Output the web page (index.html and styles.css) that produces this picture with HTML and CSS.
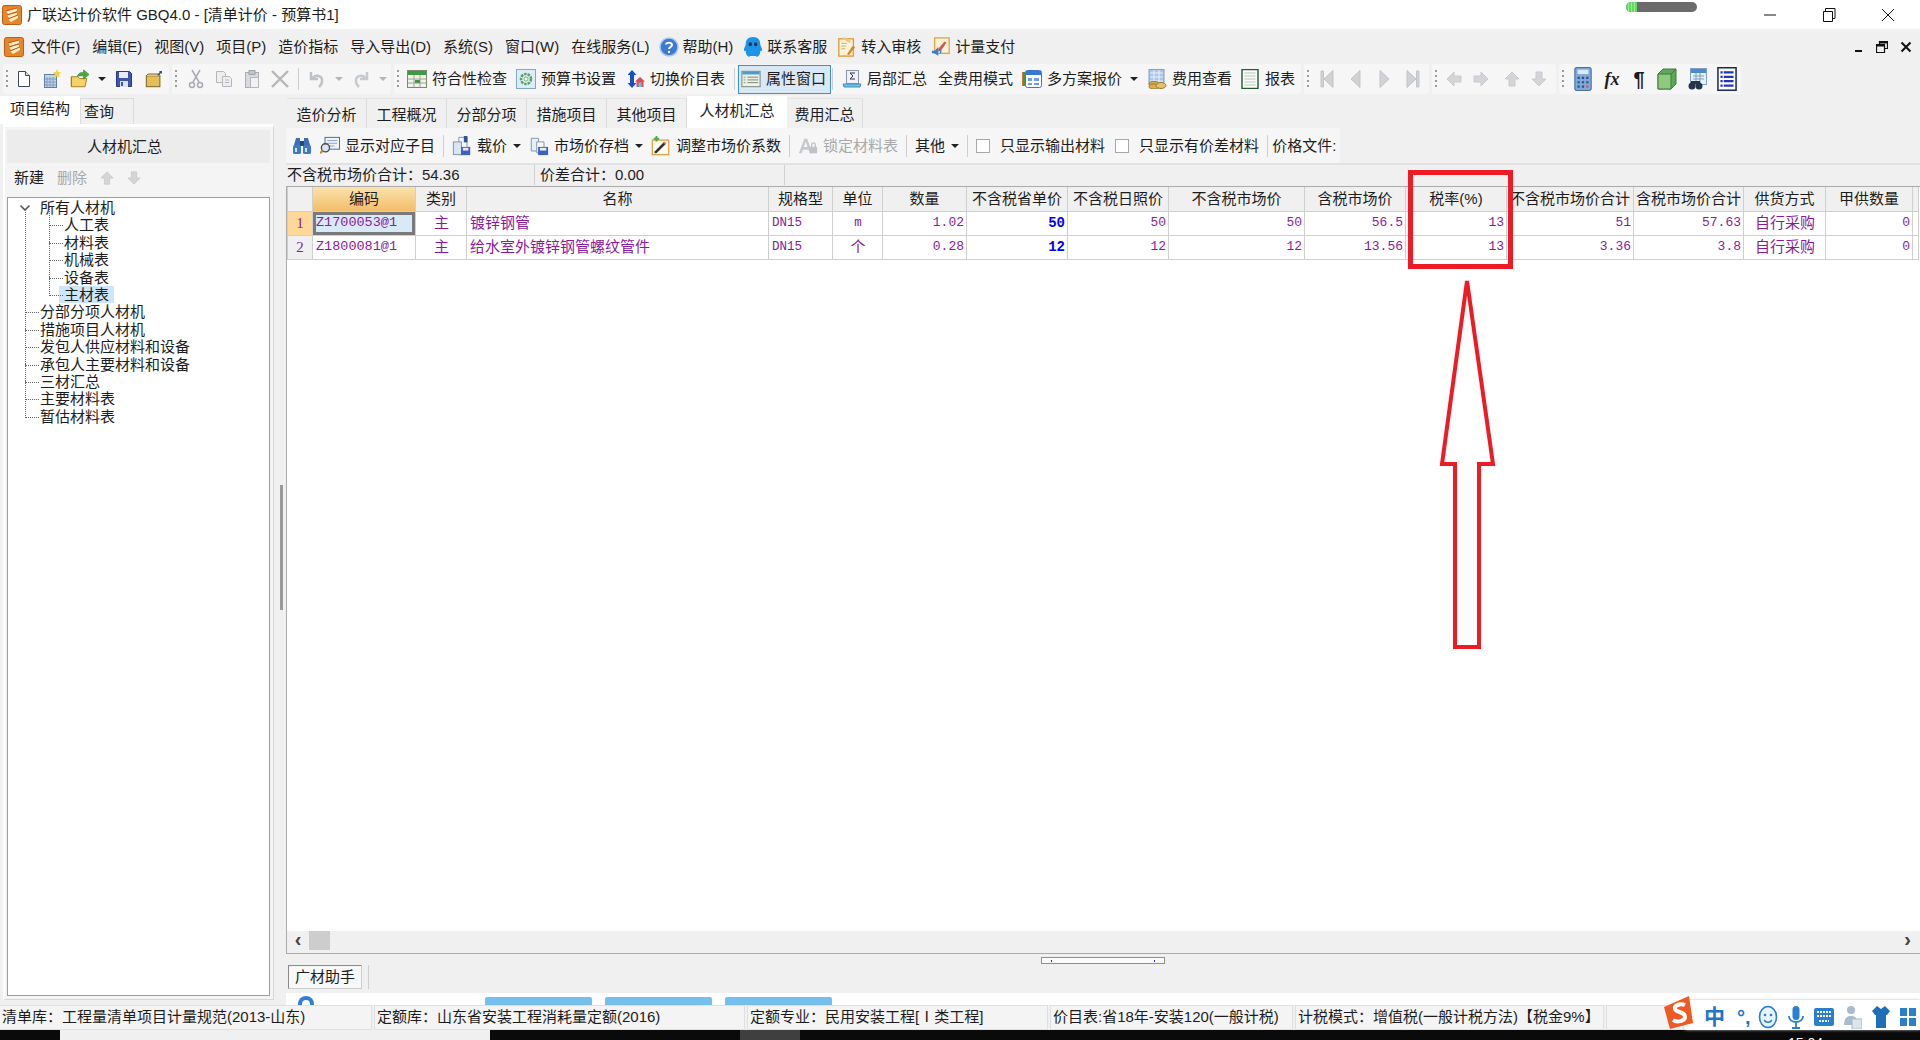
FILE: index.html
```html
<!DOCTYPE html>
<html lang="zh-CN">
<head>
    <meta charset="UTF-8">
    <title>广联达计价软件 GBQ4.0 - [清单计价 - 预算书1]</title>
    <link rel="stylesheet" href="styles.css">
</head>
<body>
    <!-- shared icons -->
    <svg class="icon-defs" width="0" height="0">
        <symbol id="i-logo" viewBox="0 0 20 20"><rect x="0.5" y="0.5" width="19" height="19" rx="2" fill="#e8842c" stroke="#b85f16"/><path d="M4 6l11-3v3L6 9zM5 10l10-3v3L7 13zM6 14l10-4v3L9 17z" fill="#fff3c4"/><path d="M4 6l11-3M5 10l10-3M6 14l10-4" stroke="#c9501a" fill="none"/></symbol>
        <symbol id="i-doc" viewBox="0 0 20 20"><path d="M4.5 2.5h7l4 4v11h-11z" fill="#fff" stroke="#3a4a5a"/><path d="M11.5 2.5v4h4" fill="#dde6ee" stroke="#3a4a5a"/></symbol>
        <symbol id="i-newtable" viewBox="0 0 20 20"><rect x="2.5" y="5.5" width="12" height="13" fill="#c5d5e8" stroke="#5f7ea3"/><path d="M5 8v10M8 8v10M11 8v10M3 10h11M3 13h11M3 16h11" stroke="#7f9cc0"/><path d="M15 0l1.2 3 3 .5-2.2 2 .6 3-2.6-1.500-2.600 1.500.6-3-2.200-2 3-.5z" fill="#f6cf3a"/></symbol>
        <symbol id="i-open" viewBox="0 0 22 20"><path d="M1.500 7.500h7l2 2h8l-2 9h-15z" fill="#f3d26a" stroke="#a07a18"/><path d="M1.500 7.500v11" stroke="#a07a18"/><path d="M8 7c1-3 4-5 7-4V0l6 5-6 5V7c-3-1-5 0-7 0z" fill="#49a93c" stroke="#2a7a22" stroke-width=".6"/></symbol>
        <symbol id="i-save" viewBox="0 0 20 20"><path d="M2.500 2.500h13l2 2v13h-15z" fill="#3f54ac" stroke="#2a3a80"/><rect x="5" y="3" width="9" height="6" fill="#e6ebf5"/><rect x="6" y="12" width="8" height="6" fill="#dfe4f0"/><rect x="7" y="13" width="2" height="4" fill="#3f54ac"/></symbol>
        <symbol id="i-folder" viewBox="0 0 22 20"><rect x="2.500" y="6.500" width="15" height="12" fill="#e3bf55" stroke="#6e5a20"/><path d="M2.500 6.500l2-2h12l1 2" fill="#f2dd96" stroke="#6e5a20"/><path d="M15 6l4-4m-2 0h2v2" stroke="#35506e" stroke-width="1.500" fill="none"/></symbol>
        <symbol id="i-cut" viewBox="0 0 20 20"><g fill="none" stroke="#a9adb3" stroke-width="1.500"><path d="M6 1l7 12M14 1L7 13"/><circle cx="6" cy="16" r="2.500"/><circle cx="14" cy="16" r="2.500"/></g></symbol>
        <symbol id="i-copy" viewBox="0 0 20 20"><g fill="#eceef0" stroke="#b4b8bd"><path d="M2.500 2.500h7l2 2v9h-9z"/><path d="M8.500 7.500h7l2 2v8h-9z"/><path d="M11 11h4M11 13.500h4" fill="none"/></g></symbol>
        <symbol id="i-paste" viewBox="0 0 20 20"><rect x="3.500" y="3.500" width="13" height="15" fill="#d8dadd" stroke="#a9adb3"/><rect x="7" y="1.500" width="6" height="4" fill="#c3c6ca" stroke="#a0a4a9"/><rect x="8.500" y="8.500" width="8" height="10" fill="#f1f2f3" stroke="#b4b8bd"/></symbol>
        <symbol id="i-del" viewBox="0 0 20 20"><path d="M2 2l16 16M18 2L2 18" stroke="#b4b7bb" stroke-width="2.400"/></symbol>
        <symbol id="i-undo" viewBox="0 0 20 20"><path d="M4 3v7h7M5 10c3-5 11-4 10 3-.3 2-1 3-3 5" fill="none" stroke="#bcc2c8" stroke-width="2.500"/></symbol>
        <symbol id="i-redo" viewBox="0 0 20 20"><path d="M16 3v7H9M15 10c-3-5-11-4-10 3 .3 2 1 3 3 5" fill="none" stroke="#c6cbd0" stroke-width="2.500"/></symbol>
        <symbol id="i-check" viewBox="0 0 20 20"><rect x=".5" y="1.500" width="19" height="17" fill="#f3f3ee" stroke="#7b8a6c"/><rect x="1" y="2" width="18" height="4" fill="#3f9a45"/><path d="M1 10h18M1 14h18M7 6v12M13 6v12" stroke="#9aa68c"/><path d="M8 11h5v3H8z" fill="#3f9a45"/></symbol>
        <symbol id="i-gear" viewBox="0 0 20 20"><rect x=".5" y=".5" width="19" height="19" fill="#dcecf8" stroke="#7fa9cc"/><circle cx="10" cy="10" r="5" fill="none" stroke="#5aa25a" stroke-width="2.500" stroke-dasharray="2.500 1"/><circle cx="10" cy="10" r="2" fill="#fff" stroke="#7fb37f"/></symbol>
        <symbol id="i-switch" viewBox="0 0 20 20"><path d="M7 1l4.500 5H9v8h2.500L7 19l-4.500-5H5V6H2.500z" fill="#1650c8"/><path d="M15 8l5 4.500h-1.500V18h-7v-5.500H10z" fill="#e24a5a"/><rect x="13.500" y="13.500" width="3" height="4.500" fill="#5bc6e8"/></symbol>
        <symbol id="i-props" viewBox="0 0 22 20"><rect x="1" y="1.500" width="20" height="17" fill="#eef2e8" stroke="#6f7f70"/><rect x="1.500" y="2" width="19" height="3" fill="#4a9cd0"/><path d="M7 8h12M7 11h12M7 14h12" stroke="#6f7f70"/><path d="M3 8h2M3 11h2M3 14h2" stroke="#5aa25a"/></symbol>
        <symbol id="i-sum" viewBox="0 0 20 20"><rect x="4.500" y="1.500" width="12" height="13" fill="#eef1f5" stroke="#8a96a6"/><path d="M13 4H8l3 3-3 3h5" fill="none" stroke="#334"/><path d="M1 15h18l-1 3H2z" fill="#6ec0ea" stroke="#3f8fbf"/></symbol>
        <symbol id="i-multi" viewBox="0 0 20 20"><rect x="0" y="3" width="4" height="14" fill="#d9762a"/><rect x="1" y="3" width="2" height="14" fill="#3f9a45"/><rect x="3.500" y="1.500" width="16" height="17" rx="2" fill="#fff" stroke="#3a78d0"/><rect x="4" y="2" width="15" height="4" fill="#3a78d0"/><path d="M6 9h4v3H6zM12 9h5v3h-5zM6 14h4v2H6zM12 14h5v2h-5z" fill="#6c9fe0"/></symbol>
        <symbol id="i-coins" viewBox="0 0 20 20"><rect x="2" y="0.500" width="15" height="14" fill="#a9c8e8" stroke="#7fa0c4"/><path d="M3 4h13M3 8h13M3 12h13M7 1v13M12 1v13" stroke="#e8f0f8"/><ellipse cx="7" cy="15" rx="5" ry="2.500" fill="#d9ae55" stroke="#9c7a2c"/><ellipse cx="7" cy="17.500" rx="5" ry="2.500" fill="#d9ae55" stroke="#9c7a2c"/><ellipse cx="14" cy="16.500" rx="5" ry="3" fill="#e4bf6d" stroke="#9c7a2c"/></symbol>
        <symbol id="i-report" viewBox="0 0 20 20"><rect x="2" y=".5" width="16" height="19" fill="#f8fbf6" stroke="#1f5a30" stroke-width="1.400"/><path d="M4.500 4h11M4.500 7h11M4.500 10h11M4.500 13h11M4.500 16h11" stroke="#b9c7bd"/></symbol>
        <symbol id="i-first" viewBox="0 0 16 20"><path d="M2 2h2.500v16H2zM14 1.500v17L5 10z" fill="#d0d3d6" stroke="#c2c5c8"/></symbol>
        <symbol id="i-prev" viewBox="0 0 16 20"><path d="M12 1.500v17L3 10z" fill="#d0d3d6" stroke="#c2c5c8"/></symbol>
        <symbol id="i-next" viewBox="0 0 16 20"><path d="M4 1.500v17L13 10z" fill="#d0d3d6" stroke="#c2c5c8"/></symbol>
        <symbol id="i-last" viewBox="0 0 16 20"><path d="M14 2h-2.500v16H14zM2 1.500v17L11 10z" fill="#d0d3d6" stroke="#c2c5c8"/></symbol>
        <symbol id="i-aleft" viewBox="0 0 16 16"><path d="M1 8l7-7v4h7v6H8v4z" fill="#d3d5d8" stroke="#c8cacc"/></symbol>
        <symbol id="i-aright" viewBox="0 0 16 16"><path d="M15 8L8 1v4H1v6h7v4z" fill="#d3d5d8" stroke="#c8cacc"/></symbol>
        <symbol id="i-aup" viewBox="0 0 16 16"><path d="M8 1l7 7h-4v7H5V8H1z" fill="#d3d5d8" stroke="#c8cacc"/></symbol>
        <symbol id="i-adown" viewBox="0 0 16 16"><path d="M8 15l7-7h-4V1H5v7H1z" fill="#d3d5d8" stroke="#c8cacc"/></symbol>
        <symbol id="i-calc" viewBox="0 0 16 22"><rect x=".5" y=".5" width="15" height="21" rx="2" fill="#7ea8d8" stroke="#4a6f9f"/><rect x="3" y="2.500" width="10" height="4" fill="#dbe8f5"/><path d="M3 9h2v2H3zM7 9h2v2H7zM11 9h2v2h-2zM3 13h2v2H3zM7 13h2v2H7zM11 13h2v2h-2zM3 17h2v2H3zM7 17h2v2H7z" fill="#2f4f7f"/><path d="M11 17h2v2h-2z" fill="#d9534f"/></symbol>
        <symbol id="i-cube" viewBox="0 0 20 22"><path d="M1 6l5-5h13v15l-5 5H1z" fill="#5fa85a" stroke="#3d7a3a"/><path d="M1 6h13v15H1z" fill="#8ec97f" stroke="#3d7a3a"/><path d="M14 6l5-5" stroke="#3d7a3a"/></symbol>
        <symbol id="i-sheetfind" viewBox="0 0 20 22"><rect x="3.500" y=".5" width="16" height="16" fill="#e8f0f8" stroke="#7fa0c4"/><rect x="4" y="1" width="15" height="4" fill="#4a8ad0"/><path d="M6 8h11M6 11h11M9 5v10M13 5v10" stroke="#7fa0c4"/><circle cx="5" cy="18" r="3.500" fill="#26344a"/><circle cx="12" cy="18" r="3.500" fill="#26344a"/><rect x="4" y="13" width="9" height="3" fill="#26344a"/></symbol>
        <symbol id="i-list" viewBox="0 0 18 22"><rect x=".7" y=".7" width="16.600" height="20.600" fill="#fff" stroke="#1c2a55" stroke-width="1.400"/><path d="M3 4h2v2H3zM3 8h2v2H3zM3 12h2v2H3zM3 16h2v2H3zM6 4h9v2H6zM6 8h9v2H6zM6 12h9v2H6zM6 16h9v2H6z" fill="#2436b8"/></symbol>
        <symbol id="i-binoc" viewBox="0 0 20 20"><path d="M2 9l2-7h4v7zM12 9V2h4l2 7z" fill="#3a6fb8"/><rect x="8" y="5" width="4" height="5" fill="#27476f"/><rect x="1" y="9" width="8" height="9" rx="1.500" fill="#3f7bc4"/><rect x="11" y="9" width="8" height="9" rx="1.500" fill="#3f7bc4"/><rect x="3" y="12" width="2" height="4" fill="#cfe3f7"/><rect x="13" y="12" width="2" height="4" fill="#cfe3f7"/></symbol>
        <symbol id="i-monitor" viewBox="0 0 22 20"><rect x="5.500" y=".5" width="16" height="13" fill="#eef3f8" stroke="#44648a"/><path d="M8 4h11M8 7h11M8 10h8" stroke="#7fa0c4"/><circle cx="6" cy="12" r="4.500" fill="#d9e6f2" stroke="#4a4a4a" stroke-width="1.500"/><path d="M3 15l-3 3" stroke="#c28a2c" stroke-width="2.500"/></symbol>
        <symbol id="i-load" viewBox="0 0 22 22"><path d="M7.500 1.500h9v19h-9z" fill="#f5f7fa" stroke="#7f8ea0"/><path d="M13 0h4v7h-4z" fill="#2f4f9f"/><rect x="1.500" y="6.500" width="9" height="14" fill="#dbe5f1" stroke="#7f8ea0"/><rect x="10" y="12" width="10" height="9" fill="#3f5fc0"/><rect x="12" y="13" width="6" height="3" fill="#e8eef8"/></symbol>
        <symbol id="i-store" viewBox="0 0 22 22"><path d="M2.500 2.500h8v14h-8z" fill="#e8eef5" stroke="#7f8ea0"/><path d="M8.500 6.500h8v12h-8z" fill="#f8fafc" stroke="#7f8ea0"/><rect x="10" y="12" width="11" height="9" fill="#3f5fc0"/><rect x="12" y="13" width="7" height="3" fill="#e8eef8"/></symbol>
        <symbol id="i-adjust" viewBox="0 0 22 22"><rect x="1.500" y="4.500" width="18" height="16" fill="#fdfbf2" stroke="#e0a44a" stroke-width="1.500"/><path d="M4 17l10-10 2 2-10 10H4z" fill="#333"/><path d="M14 7l2 2" stroke="#d9534f" stroke-width="2"/><path d="M6 0v6M3 3h6" stroke="#4aa84a" stroke-width="2"/></symbol>
        <symbol id="i-lock" viewBox="0 0 22 20"><path d="M1 18L7 2h3l6 16h-3l-1.500-4h-6L4 18zM6.500 11h4L8.500 5z" fill="#c6c9cc"/><rect x="13" y="11" width="8" height="7" fill="#bfc2c6"/><path d="M15 11V8.500a2 2 0 014 0V11" fill="none" stroke="#bfc2c6" stroke-width="1.500"/></symbol>
        <symbol id="i-help" viewBox="0 0 20 20"><circle cx="10" cy="10" r="9" fill="#3b78d8" stroke="#a9c8ef" stroke-width="1.500"/><path d="M7 7.500C7 5 13 5 13 8c0 2-3 2-3 4" fill="none" stroke="#fff" stroke-width="2"/><circle cx="10" cy="15" r="1.200" fill="#fff"/></symbol>
        <symbol id="i-service" viewBox="0 0 20 22"><path d="M10 0c6 0 8 4 8 8 0 2 2 4 2 6 0 1-1 2-2 1 0 3-1 5-2 6-1 1-2 1-3 0H7c-1 1-2 1-3 0-1-1-2-3-2-6-1 1-2 0-2-1 0-2 2-4 2-6 0-4 2-8 8-8z" fill="#1f93e8"/><ellipse cx="7" cy="8" rx="1.800" ry="2.300" fill="#08365c"/><ellipse cx="13" cy="8" rx="1.800" ry="2.300" fill="#08365c"/></symbol>
        <symbol id="i-audit" viewBox="0 0 20 22"><rect x="1" y="2" width="16" height="19" fill="#fdf3d7" stroke="#e29a3c" stroke-width="1.500"/><path d="M4 7h6M4 10h5M4 13h4" stroke="#c9a56a"/><path d="M19 11l-7 9-2-1 6-9z" fill="#d8842a"/><path d="M5 2l2-2 7 4-1 3z" fill="#e8c88a"/></symbol>
        <symbol id="i-pay" viewBox="0 0 20 22"><rect x="3" y="1" width="16" height="17" fill="#fdf3d7" stroke="#e0a44a" stroke-width="1.500"/><path d="M7 13l7-8 2 1-6 9-3 1z" fill="#d9534f"/><path d="M0 15h3l4-4v10l-4-3H0z" fill="#2f7fd8"/><path d="M9 14c1 1 1 3 0 4" stroke="#2f7fd8" stroke-width="1.500" fill="none"/></symbol>
    </svg>

    <header class="title-bar">
        <svg class="ic title-logo"><use href="#i-logo"/></svg>
        <span class="title-text">广联达计价软件 GBQ4.0 - [清单计价 - 预算书1]</span>
        <div class="net-pill"><span class="net-pill-fill"></span></div>
        <div class="win-btns">
            <svg width="14" height="14" viewBox="0 0 14 14"><path d="M1 7h12" stroke="#111"/></svg>
            <svg width="14" height="14" viewBox="0 0 14 14"><path d="M1.500 3.500h9v10h-9zM3.500 3.500v-3h9.500v10h-2.500" fill="none" stroke="#111"/></svg>
            <svg width="14" height="14" viewBox="0 0 14 14"><path d="M1 1l12 12M13 1L1 13" stroke="#111"/></svg>
        </div>
    </header>

    <nav class="menu-bar">
        <svg class="ic menu-logo"><use href="#i-logo"/></svg>
        <a class="menu-item">文件(F)</a>
        <a class="menu-item">编辑(E)</a>
        <a class="menu-item">视图(V)</a>
        <a class="menu-item">项目(P)</a>
        <a class="menu-item">造价指标</a>
        <a class="menu-item">导入导出(D)</a>
        <a class="menu-item">系统(S)</a>
        <a class="menu-item">窗口(W)</a>
        <a class="menu-item last-text">在线服务(L)</a>
        <a class="menu-item has-icon"><svg class="ic"><use href="#i-help"/></svg>帮助(H)</a>
        <a class="menu-item has-icon"><svg class="ic"><use href="#i-service"/></svg>联系客服</a>
        <a class="menu-item has-icon"><svg class="ic"><use href="#i-audit"/></svg>转入审核</a>
        <a class="menu-item has-icon"><svg class="ic"><use href="#i-pay"/></svg>计量支付</a>
        <div class="mdi-btns">
            <svg width="10" height="12" viewBox="0 0 10 12"><path d="M1 9h7v2H1z" fill="#111"/></svg>
            <svg width="12" height="12" viewBox="0 0 12 12"><path d="M.5 3.500h8v8h-8zM3.500 3.500V.5h8v7h-3" fill="none" stroke="#111" stroke-width="1.200"/><path d="M1 4h7v1.500H1zM4 1h7v1.500H4z" fill="#111"/></svg>
            <svg width="12" height="12" viewBox="0 0 12 12"><path d="M1.500 1.500l9 9M10.500 1.500l-9 9" stroke="#111" stroke-width="2"/></svg>
        </div>
    </nav>

    <div class="tool-bar">
        <div class="tool-group g1">
            <span class="grip"></span>
            <svg class="ic"><use href="#i-doc"/></svg>
            <svg class="ic"><use href="#i-newtable"/></svg>
            <svg class="ic"><use href="#i-open"/></svg>
            <span class="caret"></span>
            <svg class="ic"><use href="#i-save"/></svg>
            <svg class="ic folder"><use href="#i-folder"/></svg>
        </div>
        <div class="tool-group g2">
            <span class="grip"></span>
            <svg class="ic"><use href="#i-cut"/></svg>
            <svg class="ic"><use href="#i-copy"/></svg>
            <svg class="ic"><use href="#i-paste"/></svg>
            <svg class="ic"><use href="#i-del"/></svg>
            <span class="sep"></span>
            <svg class="ic"><use href="#i-undo"/></svg>
            <span class="caret off"></span>
            <svg class="ic"><use href="#i-redo"/></svg>
            <span class="caret off"></span>
        </div>
        <div class="tool-group g3">
            <span class="grip"></span>
            <span class="tool"><svg class="ic"><use href="#i-check"/></svg>符合性检查</span>
            <span class="tool"><svg class="ic"><use href="#i-gear"/></svg>预算书设置</span>
            <span class="tool"><svg class="ic"><use href="#i-switch"/></svg>切换价目表</span>
            <span class="sep"></span>
            <span class="tool tool-on"><svg class="ic"><use href="#i-props"/></svg>属性窗口</span>
            <span class="sep"></span>
            <span class="tool"><svg class="ic"><use href="#i-sum"/></svg>局部汇总</span>
            <span class="tool tool-fee">全费用模式</span>
            <span class="tool"><svg class="ic"><use href="#i-multi"/></svg>多方案报价</span>
            <span class="caret"></span>
            <span class="tool"><svg class="ic"><use href="#i-coins"/></svg>费用查看</span>
            <span class="tool tool-report"><svg class="ic"><use href="#i-report"/></svg>报表</span>
        </div>
        <div class="tool-group g4">
            <span class="grip"></span>
            <svg class="ic-nav"><use href="#i-first"/></svg>
            <svg class="ic-nav"><use href="#i-prev"/></svg>
            <svg class="ic-nav"><use href="#i-next"/></svg>
            <svg class="ic-nav"><use href="#i-last"/></svg>
        </div>
        <div class="tool-group g5">
            <span class="grip"></span>
            <svg class="ic-arrow"><use href="#i-aleft"/></svg>
            <svg class="ic-arrow wide"><use href="#i-aright"/></svg>
            <svg class="ic-arrow"><use href="#i-aup"/></svg>
            <svg class="ic-arrow"><use href="#i-adown"/></svg>
        </div>
        <div class="tool-group g6">
            <span class="grip"></span>
            <svg class="ic-tall"><use href="#i-calc"/></svg>
            <span class="glyph-fx">fx</span>
            <span class="glyph-para">¶</span>
            <svg class="ic-tall"><use href="#i-cube"/></svg>
            <svg class="ic-tall"><use href="#i-sheetfind"/></svg>
            <svg class="ic-tall"><use href="#i-list"/></svg>
        </div>
    </div>

    <div class="workspace">
        <aside class="left-pane">
            <div class="left-tabs">
                <span class="left-tab active">项目结构</span>
                <span class="left-tab">查询</span>
            </div>
            <div class="left-body">
                <div class="left-title">人材机汇总</div>
                <div class="left-actions">
                    <span>新建</span>
                    <span class="off">删除</span>
                    <svg class="ic-small"><use href="#i-aup"/></svg>
                    <svg class="ic-small"><use href="#i-adown"/></svg>
                </div>
                <div class="tree-box">
                    <ul class="tree">
                        <li class="root">
                            <svg class="expander" width="12" height="8" viewBox="0 0 12 8"><path d="M1.500 1.500L6 6l4.500-4.500" fill="none" stroke="#555" stroke-width="1.600"/></svg>
                            所有人材机
                            <ul class="tree-sub">
                                <li>人工表</li>
                                <li>材料表</li>
                                <li>机械表</li>
                                <li>设备表</li>
                                <li><span class="tree-sel">主材表</span></li>
                            </ul>
                        </li>
                        <li>分部分项人材机</li>
                        <li>措施项目人材机</li>
                        <li>发包人供应材料和设备</li>
                        <li>承包人主要材料和设备</li>
                        <li>三材汇总</li>
                        <li>主要材料表</li>
                        <li>暂估材料表</li>
                    </ul>
                </div>
            </div>
        </aside>

        <div class="splitter"><span class="splitter-grip"></span></div>

        <main class="right-pane">
            <div class="main-tabs">
                <span class="main-tab">造价分析</span>
                <span class="main-tab">工程概况</span>
                <span class="main-tab">分部分项</span>
                <span class="main-tab">措施项目</span>
                <span class="main-tab">其他项目</span>
                <span class="main-tab active">人材机汇总</span>
                <span class="main-tab">费用汇总</span>
            </div>

            <div class="sub-bar">
                <svg class="ic"><use href="#i-binoc"/></svg>
                <span class="tool"><svg class="ic"><use href="#i-monitor"/></svg>显示对应子目</span>
                <span class="sep"></span>
                <span class="tool"><svg class="ic"><use href="#i-load"/></svg>载价</span>
                <span class="caret"></span>
                <span class="tool"><svg class="ic"><use href="#i-store"/></svg>市场价存档</span>
                <span class="caret"></span>
                <span class="tool"><svg class="ic"><use href="#i-adjust"/></svg>调整市场价系数</span>
                <span class="sep"></span>
                <span class="tool off"><svg class="ic"><use href="#i-lock"/></svg>锁定材料表</span>
                <span class="sep"></span>
                <span class="tool">其他</span>
                <span class="caret"></span>
                <span class="sep"></span>
                <label class="check"><span class="check-box"></span>只显示输出材料</label>
                <label class="check"><span class="check-box"></span>只显示有价差材料</label>
                <span class="sep sep-tight"></span>
                <span class="tool">价格文件:</span>
            </div>

            <div class="summary">
                <span class="sum-a">不含税市场价合计：54.36</span>
                <span class="sum-b">价差合计：0.00</span>
            </div>

            <div class="grid-wrap">
                <div class="grid-scroll">
                    <table class="grid">
                        <colgroup>
                            <col class="c-row"><col class="c-code"><col class="c-type"><col class="c-name">
                            <col class="c-spec"><col class="c-unit"><col class="c-qty"><col class="c-prov">
                            <col class="c-day"><col class="c-mkt"><col class="c-mkt2"><col class="c-rate">
                            <col class="c-sum"><col class="c-sum2"><col class="c-supply"><col class="c-party">
                            <col class="c-end">
                        </colgroup>
                        <thead>
                            <tr>
                                <th></th><th class="col-on">编码</th><th>类别</th><th>名称</th><th>规格型</th><th>单位</th><th>数量</th>
                                <th>不含税省单价</th><th>不含税日照价</th><th>不含税市场价</th><th>含税市场价</th><th>税率(%)</th>
                                <th>不含税市场价合计</th><th>含税市场价合计</th><th>供货方式</th><th>甲供数量</th><th></th>
                            </tr>
                        </thead>
                        <tbody>
                            <tr>
                                <td class="row-no row-on">1</td><td class="mono code cell-on">Z1700053@1</td><td class="ctr">主</td><td>镀锌钢管</td>
                                <td class="mono">DN15</td><td class="ctr mono">m</td><td class="num">1.02</td><td class="num strong">50</td>
                                <td class="num">50</td><td class="num">50</td><td class="num">56.5</td><td class="num">13</td>
                                <td class="num">51</td><td class="num">57.63</td><td class="ctr">自行采购</td><td class="num">0</td><td></td>
                            </tr>
                            <tr>
                                <td class="row-no">2</td><td class="mono code">Z1800081@1</td><td class="ctr">主</td><td>给水室外镀锌钢管螺纹管件</td>
                                <td class="mono">DN15</td><td class="ctr">个</td><td class="num">0.28</td><td class="num strong">12</td>
                                <td class="num">12</td><td class="num">12</td><td class="num">13.56</td><td class="num">13</td>
                                <td class="num">3.36</td><td class="num">3.8</td><td class="ctr">自行采购</td><td class="num">0</td><td></td>
                            </tr>
                        </tbody>
                    </table>
                </div>
                <div class="h-scroll">
                    <span class="h-arrow">‹</span>
                    <span class="h-thumb"></span>
                    <span class="h-arrow end">›</span>
                </div>
            </div>

            <div class="assist">
                <span class="resize-handle"><i></i><i></i></span>
                <span class="assist-tab">广材助手</span>
                <span class="assist-line"></span>
            </div>

            <div class="assist-strip">
                <svg class="strip-icon" width="20" height="12" viewBox="0 0 20 12"><circle cx="10" cy="11" r="8" fill="#2f7fd8"/><circle cx="10" cy="11" r="4" fill="#fff"/></svg>
                <span class="strip-tab"></span>
                <span class="strip-tab"></span>
                <span class="strip-tab"></span>
            </div>
        </main>
    </div>

    <footer class="status-bar">
        <span class="status-cell s1">清单库：工程量清单项目计量规范(2013-山东)</span>
        <span class="status-cell s2">定额库：山东省安装工程消耗量定额(2016)</span>
        <span class="status-cell s3">定额专业：民用安装工程[Ⅰ类工程]</span>
        <span class="status-cell s4">价目表:省18年-安装120(一般计税)</span>
        <span class="status-cell s5">计税模式：增值税(一般计税方法)【税金9%】</span>
        <span class="status-cell s6"></span>
    </footer>

    <div class="task-bar">
        <span class="task-a"></span>
        <span class="task-b"></span>
        <span class="task-c"></span>
        <span class="task-d"></span>
        <span class="task-clock">15:04</span>
    </div>

    <!-- input method bar floats over the status bar -->
    <div class="ime-bar">
        <svg class="ime-s" width="34" height="36" viewBox="0 0 34 36"><path d="M0 11L25 0l4 27-23 6z" fill="#ef5a24"/><path d="M21 9c-4-2-11 0-10 4 1 4 10 2 10 8 0 4-8 6-12 3" fill="none" stroke="#fff" stroke-width="4"/></svg>
        <span class="ime-zh">中</span>
        <span class="ime-punc">°,</span>
        <svg class="ime-smile" width="20" height="24" viewBox="0 0 20 24"><ellipse cx="10" cy="12" rx="8.500" ry="10.500" fill="#e8f3fc" stroke="#2a7fd0" stroke-width="1.600"/><circle cx="7" cy="10" r="1.300" fill="#2a7fd0"/><circle cx="13" cy="10" r="1.300" fill="#2a7fd0"/><path d="M6 15c2 3 6 3 8 0" fill="none" stroke="#2a7fd0" stroke-width="1.500"/></svg>
        <svg width="16" height="24" viewBox="0 0 16 24"><rect x="4.500" y="1" width="7" height="14" rx="3.500" fill="#2a7fd0"/><path d="M1 11c0 8 14 8 14 0M8 18v5M4 23h8" fill="none" stroke="#2a7fd0" stroke-width="1.800"/></svg>
        <svg width="20" height="18" viewBox="0 0 20 18"><rect width="20" height="18" rx="2" fill="#2a7fd0"/><path d="M3 4h14M3 8h14M5 13h10" stroke="#fff" stroke-width="2" stroke-dasharray="2 1"/></svg>
        <svg class="ime-user" width="18" height="24" viewBox="0 0 18 24"><circle cx="7" cy="5" r="4" fill="#a9bccd"/><path d="M0 20c0-7 3-9 7-9s7 2 7 9z" fill="#a9bccd"/><rect x="8" y="14" width="10" height="10" fill="#dbe4ec" stroke="#a9bccd"/></svg>
        <svg width="18" height="22" viewBox="0 0 18 22"><path d="M5 0l4 3 4-3 5 5-3 4h-1v13H4V9H3L0 5z" fill="#1f6fb8"/></svg>
        <svg width="16" height="20" viewBox="0 0 16 20"><path d="M0 1h7v8H0zM9 1h7v8H9zM0 11h7v8H0zM9 11h7v8H9z" fill="#2a7fd0"/></svg>
    </div>

    <!-- red markup drawn on the screenshot -->
    <svg class="markup" width="1920" height="1040" viewBox="0 0 1920 1040">
        <rect x="1410.500" y="172.500" width="100" height="94" fill="none" stroke="#ed1c24" stroke-width="5"/>
        <path d="M1467 281L1442 464H1455V647H1479V464H1493z" fill="none" stroke="#ed1c24" stroke-width="4"/>
    </svg>
</body>
</html>
```

FILE: styles.css
```css
/* Base styles */
:root {
    --chrome: #f0f0f0;
    --group: #f6f6f6;
    --line: #c4c4c4;
    --text: #1c1c1c;
    --muted: #a8a8a8;
    --purple: #8b1a9b;
    --red: #ed1c24;
}

* {
    margin: 0;
    padding: 0;
    box-sizing: border-box;
}

html, body {
    height: 1040px;
    overflow: hidden;
}

body {
    position: relative;
    display: flex;
    flex-direction: column;
    background: var(--chrome);
    color: var(--text);
    font-family: "Liberation Sans", "Noto Sans CJK SC", sans-serif;
    font-size: 15px;
    line-height: 20px;
}

.icon-defs {
    position: absolute;
}

.ic { width: 20px; height: 20px; flex: none; }
.ic-nav { width: 16px; height: 20px; flex: none; }
.ic-arrow { width: 16px; height: 16px; flex: none; }
.ic-tall { width: 20px; height: 24px; flex: none; }
.ic-small { width: 14px; height: 14px; flex: none; }

.off { color: var(--muted); }

/* Title bar */
.title-bar {
    height: 29px;
    flex: none;
    display: flex;
    align-items: center;
    background: #fff;
    padding-left: 2px;
}

.title-text {
    margin-left: 5px;
    font-size: 15px;
}

.net-pill {
    margin-left: auto;
    margin-right: 66px;
    margin-bottom: 16px;
    width: 71px;
    height: 10px;
    border-radius: 5px;
    background: #6b6b6b;
}

.net-pill-fill {
    display: block;
    width: 11px;
    height: 10px;
    border-radius: 5px 0 0 5px;
    background: repeating-linear-gradient(90deg, #5fdc5f 0 2px, #9de89d 2px 3px);
}

.win-btns {
    display: flex;
    gap: 45px;
    padding-right: 25px;
}

/* Menu bar */
.menu-bar {
    height: 35px;
    flex: none;
    display: flex;
    align-items: center;
    padding-left: 4px;
}

.menu-logo { margin-right: 7px; }

.menu-item {
    margin-right: 12px;
    white-space: nowrap;
}

.menu-item.last-text { margin-right: 9px; }

.menu-item.has-icon {
    display: flex;
    align-items: center;
    gap: 4px;
    margin-right: 10px;
}

.mdi-btns {
    margin-left: auto;
    display: flex;
    align-items: center;
    gap: 12px;
    padding-right: 8px;
}

/* Main toolbar */
.tool-bar {
    height: 32px;
    flex: none;
    display: flex;
    gap: 3px;
    padding-left: 3px;
}

.tool-group {
    height: 30px;
    display: flex;
    align-items: center;
    background: var(--group);
    border-radius: 3px;
    padding-left: 3px;
}

.grip {
    width: 2px;
    height: 18px;
    flex: none;
    background: repeating-linear-gradient(180deg, #9a9a9a 0 2px, transparent 2px 5px);
}

.caret {
    width: 0;
    height: 0;
    flex: none;
    border-left: 4px solid transparent;
    border-right: 4px solid transparent;
    border-top: 4px solid #222;
}

.caret.off { border-top-color: #b5b5b5; }

.sep {
    width: 1px;
    height: 22px;
    flex: none;
    background: #cfcfcf;
}

.tool {
    display: flex;
    align-items: center;
    gap: 5px;
    white-space: nowrap;
}

.g1 { width: 166px; gap: 8px; }
.g1 .grip { margin-right: -2px; }
.g1 .folder { margin-left: 2px; }

.g2 { width: 219px; gap: 8px; }
.g2 .grip { margin-right: 1px; }

.g3 { width: 907px; gap: 9px; }
.g3 .grip { margin-right: -1px; }

.tool-on {
    height: 29px;
    width: 93px;
    padding-left: 2px;
    margin: 0 -8px 0 -6px;
    background: #d9e8f5;
    border: 1px solid #3d8fd0;
}

.g3 .caret { margin: 0 0 0 -1px; }
.tool-fee { margin-left: 2px; }
.tool-report { margin-left: -1px; }

.g4 { width: 125px; }
.g4 .grip { margin-right: 10px; }
.g4 .ic-nav { margin-right: 12.500px; }

.g5 { width: 124px; }
.g5 .grip { margin-right: 9px; }
.g5 .ic-arrow { margin-right: 11px; }
.g5 .ic-arrow.wide { margin-right: 15px; }

.g6 { width: 182px; gap: 10px; }
.g6 .grip { margin-right: -1px; }

.glyph-fx {
    width: 18px;
    font-family: "Liberation Serif", serif;
    font-style: italic;
    font-weight: 700;
    font-size: 18px;
    text-align: center;
}

.glyph-para {
    width: 16px;
    font-family: "Liberation Sans", sans-serif;
    font-weight: 700;
    font-size: 20px;
    text-align: center;
}

/* Workspace */
.workspace {
    height: 909px;
    flex: none;
    display: flex;
}

.left-pane {
    width: 280px;
    flex: none;
    padding-bottom: 5px;
    display: flex;
    flex-direction: column;
}

.left-tabs {
    height: 28px;
    flex: none;
    display: flex;
    align-items: flex-end;
}

.left-tab {
    height: 26px;
    padding-top: 3px;
    text-align: center;
    border: 1px solid #dcdcdc;
    border-bottom: none;
}

.left-tab:first-child { width: 80px; }
.left-tab:nth-child(2) { width: 54px; text-align: left; padding-left: 3px; }

.left-tab.active {
    height: 28px;
    background: #fff;
    border: none;
}

.left-body {
    flex: 1;
    margin-left: 3px;
    margin-right: 6px;
    padding: 3px 3px 3px 2px;
    display: flex;
    flex-direction: column;
    background: #f4f4f4;
    border: 1px solid #d8d8d8;
    border-top: 3px solid #fff;
    border-left: 2px solid #fff;
}

.left-title {
    height: 33px;
    flex: none;
    line-height: 33px;
    text-align: center;
    padding-right: 28px;
    background: #ececec;
}

.left-actions {
    height: 34px;
    flex: none;
    display: flex;
    align-items: center;
    gap: 13px;
    padding: 0 0 4px 7px;
    background: #f4f4f4;
}

.tree-box {
    flex: 1;
    background: #fff;
    border: 1px solid #9b9ba8;
    padding: 1px 0 0 32px;
}

/* Tree */
.tree {
    list-style: none;
    line-height: 17.4px;
    white-space: nowrap;
}

.tree ul { list-style: none; }

.tree li { position: relative; }

.tree > li:not(.root)::before,
.tree-sub li::before {
    content: "";
    position: absolute;
    left: -15px;
    top: -9px;
    width: 13px;
    height: 18px;
    border-left: 1px dotted #666;
    border-bottom: 1px dotted #666;
}

.root::after {
    content: "";
    position: absolute;
    left: -15px;
    top: 13px;
    bottom: 0;
    border-left: 1px dotted #666;
}

.expander {
    position: absolute;
    left: -21px;
    top: 5px;
}

.tree-sub { padding-left: 24px; }

.tree-sel {
    display: inline-block;
    background: #cde6f9;
    margin-left: -5px;
    padding: 0 5px;
}

/* Splitter */
.splitter {
    width: 6px;
    flex: none;
    padding-top: 389px;
}

.splitter-grip {
    display: block;
    width: 3px;
    height: 125px;
    background: #9a9a9a;
}

/* Right pane */
.right-pane {
    flex: 1;
    min-width: 0;
    display: flex;
    flex-direction: column;
}

.main-tabs {
    height: 32px;
    flex: none;
    display: flex;
    align-items: flex-end;
    padding-left: 1px;
}

.main-tab {
    width: 80px;
    height: 30px;
    line-height: 31px;
    text-align: center;
    border-right: 1px solid #dcdcdc;
    border-top: 1px solid #e4e4e4;
}

.main-tab.active {
    width: 100px;
    height: 32px;
    line-height: 30px;
    background: #fff;
    border: none;
}

.main-tab:last-child { width: 76px; }

.sub-bar {
    height: 35px;
    width: 1054px;
    flex: none;
    display: flex;
    align-items: center;
    gap: 8px;
    padding-left: 6px;
    background: var(--group);
    border-radius: 3px;
}

.sub-bar .sep { height: 22px; }
.sub-bar .caret { margin: 0 0 0 -2px; }
.sub-bar .sep-tight { margin: 0 -4px 0 -2px; }

.check {
    display: flex;
    align-items: center;
    gap: 10px;
    margin-right: 2px;
    white-space: nowrap;
}

.check-box {
    width: 14px;
    height: 14px;
    background: #fff;
    border: 1px solid #a8a8a8;
}

.summary {
    height: 23px;
    flex: none;
    display: flex;
    align-items: center;
    padding-bottom: 2px;
    border-top: 2px solid #e2e2e2;
}

.sum-a {
    width: 249px;
    padding-left: 1px;
    border-right: 1px solid #d0d0d0;
}

.sum-b {
    width: 250px;
    padding-left: 5px;
    border-right: 1px solid #d0d0d0;
}

/* Grid */
.grid-wrap {
    height: 768px;
    flex: none;
    display: flex;
    flex-direction: column;
    border: 1px solid #aaa;
    border-right: none;
    background: #fff;
}

.grid-scroll {
    flex: 1;
    overflow: hidden;
}

.grid {
    width: 1631px;
    table-layout: fixed;
    border-collapse: collapse;
    color: var(--purple);
}

.c-row { width: 25px; }
.c-code { width: 103px; }
.c-type { width: 51px; }
.c-name { width: 302px; }
.c-spec { width: 64px; }
.c-unit { width: 50px; }
.c-qty { width: 84px; }
.c-prov { width: 101px; }
.c-day { width: 101px; }
.c-mkt { width: 136px; }
.c-mkt2 { width: 101px; }
.c-rate { width: 101px; }
.c-sum { width: 127px; }
.c-sum2 { width: 110px; }
.c-supply { width: 82px; }
.c-party { width: 87px; }
.c-end { width: 6px; }

.grid th {
    height: 24px;
    font-weight: 400;
    color: var(--text);
    background: var(--chrome);
    border: 1px solid #cfcfcf;
    border-top: none;
    white-space: nowrap;
    overflow: hidden;
}

.grid th.col-on {
    background: linear-gradient(180deg, #fbe3ad, #f2bd68);
}

.grid td {
    height: 24px;
    padding: 0 2px 0 3px;
    border: 1px solid #cfcfcf;
    white-space: nowrap;
    overflow: hidden;
}

.grid .row-no {
    padding: 0;
    text-align: center;
    background: var(--chrome);
    font-family: "Liberation Serif", serif;
}

.grid .row-on { background: #ffd797; }

.grid .cell-on {
    background: #d8e9f8;
    box-shadow: inset 0 0 0 3px #7a7a7a;
}

.grid .code { font-size: 13.5px; padding-left: 3px; }

.ctr { text-align: center; }

.mono {
    font-family: "Liberation Mono", "Noto Sans CJK SC", monospace;
    font-size: 12.5px;
}

.num {
    text-align: right;
    font-family: "Liberation Mono", monospace;
    font-size: 13px;
}

.grid .strong {
    color: #0000f0;
    font-weight: 700;
    font-size: 14px;
}

.h-scroll {
    height: 22px;
    flex: none;
    display: flex;
    align-items: flex-start;
    background: var(--chrome);
}

.h-arrow {
    width: 22px;
    text-align: center;
    font-size: 20px;
    font-weight: 700;
    line-height: 16px;
    color: #444;
}

.h-arrow.end { margin-left: auto; width: 25px; }

.h-thumb {
    width: 21px;
    height: 19px;
    background: #cdcdcd;
}

/* Helper tab area */
.assist {
    height: 39px;
    flex: none;
    position: relative;
    display: flex;
    align-items: flex-end;
    padding: 0 0 4px 2px;
}

.resize-handle {
    position: absolute;
    top: 3px;
    left: 755px;
    width: 124px;
    height: 7px;
    display: flex;
    justify-content: space-between;
    align-items: center;
    padding: 0 9px;
    background: #fbfbfb;
    border: 1px solid #8f8f8f;
}

.resize-handle i {
    width: 1px;
    height: 2px;
    background: #2222cc;
}

.assist-tab {
    width: 74px;
    height: 24px;
    line-height: 22px;
    text-align: center;
    background: #f8f8f8;
    border: 1px solid #8a8a8a;
    border-right-color: #ccc;
    border-bottom-color: #ccc;
}

.assist-line {
    width: 1px;
    height: 24px;
    margin-left: 6px;
    background: #cfcfcf;
}

.assist-strip {
    height: 12px;
    flex: none;
    display: flex;
    align-items: flex-end;
    overflow: hidden;
    background: #fff;
}

.strip-icon {
    margin-left: 10px;
    margin-right: 169px;
}

.strip-tab {
    width: 107px;
    height: 8px;
    margin-right: 13px;
    border-radius: 2px 2px 0 0;
    background: #75bfee;
}

/* Status bar */
.status-bar {
    height: 25px;
    flex: none;
    display: flex;
    gap: 2px;
}

.status-cell {
    height: 25px;
    line-height: 22px;
    padding-left: 2px;
    white-space: nowrap;
    overflow: hidden;
    background: #f4f4f4;
    border: 1px solid #e0e0e0;
}

.s1 { width: 372px; border-left: none; }
.s2 { width: 371px; }
.s3 { width: 301px; }
.s4 { width: 243px; }
.s5 { width: 309px; }
.s6 { flex: 1; }

/* Taskbar strip */
.task-bar {
    height: 10px;
    flex: none;
    display: flex;
    overflow: hidden;
    position: relative;
    background: #0a0a0a;
}

.task-a { width: 60px; }
.task-b { width: 430px; background: #f0f0f0; }
.task-c { width: 250px; }
.task-d { width: 60px; background: #3f3f3f; }

.task-clock {
    position: absolute;
    left: 1788px;
    top: 3px;
    color: #fff;
    font-size: 14px;
}

/* Input method bar */
.ime-bar {
    position: absolute;
    left: 1664px;
    top: 996px;
    width: 256px;
    height: 36px;
    display: flex;
    align-items: center;
    gap: 10px;
    padding-top: 6px;
}

.ime-bar::before {
    content: "";
    position: absolute;
    left: 20px;
    right: 0;
    top: 4px;
    bottom: 2px;
    background: #fff;
    border-radius: 3px 0 0 3px;
    box-shadow: 0 0 3px #bbb;
}

.ime-bar > * { position: relative; flex: none; }

.ime-s {
    position: absolute;
    left: 0;
    top: 0;
}

.ime-zh {
    margin-left: 40px;
    color: #1f75c8;
    font-size: 21px;
    font-weight: 700;
}

.ime-punc {
    color: #1f75c8;
    font-size: 20px;
    font-weight: 700;
    margin-left: 2px;
}

.ime-smile { margin-left: -3px; }

/* Red markup */
.markup {
    position: absolute;
    left: 0;
    top: 0;
    pointer-events: none;
}
```
